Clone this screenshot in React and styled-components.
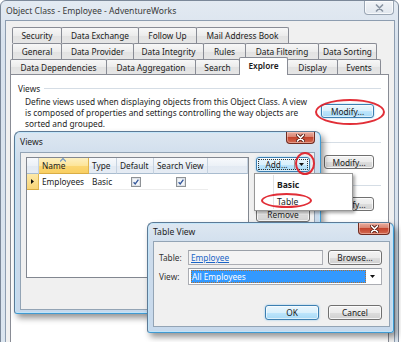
import React from 'react';
import styled, { createGlobalStyle, css } from 'styled-components';

const FONT = `"Noto Sans", "Segoe UI", sans-serif`;

const GlobalStyle = createGlobalStyle`
  html, body { margin: 0; padding: 0; }
  body {
    width: 401px; height: 342px; overflow: hidden; background: #ffffff;
    font-family: ${FONT}; font-size: 8.3px; color: #1b1b1b;
  }
  * { box-sizing: border-box; }
`;

const Desktop = styled.div`
  position: relative;
  width: 401px;
  height: 342px;
  overflow: hidden;
`;

/* ---------- main window ---------- */
const MainWindow = styled.div`
  width: 399px;
  height: 370px;
  border: 1px solid #7b8899;
  border-radius: 6px 6px 0 0;
  background: linear-gradient(#e3eaf2, #d8e2ed 40px, #dbe5ef);
  display: flex;
  flex-direction: column;
`;

const TitleBar = styled.div`
  height: ${p => p.$h}px;
  flex: none;
  display: flex;
  align-items: flex-start;
  padding-left: ${p => p.$pl}px;
`;

const TitleText = styled.div`
  align-self: center;
  font-size: 8.6px;
  color: ${p => (p.$dim ? '#3a3a3a' : '#1e1e1e')};
  white-space: nowrap;
`;

const CloseBtn = styled.div`
  margin-left: auto;
  margin-right: ${p => p.$mr}px;
  width: ${p => p.$w}px;
  height: ${p => p.$h}px;
  flex: none;
  display: flex;
  align-items: center;
  justify-content: center;
  border-radius: 0 0 4px 4px;
  ${p =>
    p.$active
      ? css`
          border: 1px solid #6f2b20;
          border-top: none;
          background: linear-gradient(#e9ad9f, #d98370 45%, #c4442d 50%, #d26a51);
          box-shadow: inset 0 0 0 1px rgba(255, 220, 210, 0.45);
        `
      : css`
          border: 1px solid #9aa6b4;
          border-top: none;
          background: linear-gradient(#f1f4f8, #e1e7ee);
          box-shadow: inset 0 0 0 1px rgba(255, 255, 255, 0.7);
        `}
`;

const XGlyph = ({ color, outline }) => (
  <svg width="9" height="8" viewBox="0 0 9 8">
    {outline && (
      <path d="M1.5 1 L7.5 7 M7.5 1 L1.5 7" stroke={outline} strokeWidth="3.4" strokeLinecap="round" />
    )}
    <path d="M1.5 1 L7.5 7 M7.5 1 L1.5 7" stroke={color} strokeWidth="1.7" strokeLinecap="round" />
  </svg>
);

const Client = styled.div`
  flex: 1;
  margin: 0 3px 0 4px;
  border: 1px solid #8d9db0;
  border-bottom: none;
  background: #f0f0f0;
  padding: 6px 5px 0 4px;
  display: flex;
  flex-direction: column;
`;

/* ---------- tabs ---------- */
const TabStrip = styled.div`
  position: relative;
  z-index: 1;
  display: flex;
  flex-direction: column;
`;

const TabRow = styled.div`
  height: ${p => p.$h}px;
  padding-left: ${p => p.$indent}px;
  display: flex;
  align-items: flex-end;
`;

const Tab = styled.div`
  width: ${p => p.$w}px;
  height: ${p => p.$h}px;
  margin-left: -1px;
  &:first-child { margin-left: 0; }
  flex: none;
  border: 1px solid #898c95;
  border-bottom: none;
  border-radius: 2px 2px 0 0;
  background: linear-gradient(#f7f7f7, #ececec 50%, #e2e2e2 51%, #e6e6e6);
  display: flex;
  align-items: center;
  justify-content: center;
  white-space: nowrap;
  color: #1b1b1b;
  ${p =>
    p.$selected &&
    css`
      position: relative;
      z-index: 2;
      height: ${p.$h + 3}px;
      margin-bottom: -1px;
      background: #ffffff;
      font-weight: 600;
      padding-bottom: 3px;
    `}
`;

const Panel = styled.div`
  flex: 1;
  background: #ffffff;
  border: 1px solid #898c95;
  padding: 8px 7px 0 7px;
  display: flex;
  flex-direction: column;
`;

const GroupHeader = styled.div`
  height: 11px;
  margin-top: ${p => p.$mt}px;
  display: flex;
  align-items: center;
  gap: 4px;
  white-space: nowrap;
  color: #1e1e1e;
  &::after {
    content: '';
    flex: 1;
    height: 1px;
    background: #d5dde5;
  }
`;

const GroupBody = styled.div`
  margin-top: 2px;
  min-height: ${p => p.$h}px;
  display: flex;
  align-items: flex-start;
  justify-content: flex-end;
`;

const Desc = styled.div`
  margin-left: 7px;
  margin-right: auto;
  line-height: 11px;
  white-space: nowrap;
  color: #1e1e1e;
`;

/* ---------- buttons ---------- */
const Button = styled.div`
  width: ${p => p.$w}px;
  height: ${p => p.$h || 15}px;
  margin-top: ${p => p.$mt || 0}px;
  margin-right: ${p => p.$mr || 0}px;
  flex: none;
  border: 1px solid #707070;
  border-radius: 3px;
  background: linear-gradient(#f3f3f3, #ebebeb 50%, #dddddd 51%, #d0d0d0);
  box-shadow: inset 0 0 0 1px rgba(255, 255, 255, 0.75);
  display: flex;
  align-items: center;
  justify-content: center;
  white-space: nowrap;
  color: #1b1b1b;
  ${p =>
    p.$hot &&
    css`
      border-color: #3c7fb1;
      background: linear-gradient(#eaf6fd, #d9f0fc 50%, #bee6fd 51%, #a7d9f5);
      box-shadow: inset 0 0 0 1px rgba(255, 255, 255, 0.6), 0 0 2px rgba(60, 160, 230, 0.6);
    `}
`;

const SplitButton = styled(Button)`
  justify-content: flex-start;
  padding: 1px;
`;

const FocusRect = styled.div`
  flex: 1;
  height: 100%;
  border: 1px dotted #333;
  display: flex;
  align-items: center;
`;

const SplitLabel = styled.div`
  flex: 1;
  text-align: center;
`;

const SplitArrow = styled.div`
  width: 13px;
  height: 100%;
  border-left: 1px solid #9a9a9a;
  display: flex;
  align-items: center;
  justify-content: center;
`;

/* ---------- dialogs ---------- */
const Window = styled.div`
  position: absolute;
  left: ${p => p.$x}px;
  top: ${p => p.$y}px;
  width: ${p => p.$w}px;
  height: ${p => p.$h}px;
  border: 1px solid #5c7a96;
  border-right-color: #3f9ad2;
  border-bottom-color: #3f9ad2;
  border-radius: 6px 6px 3px 3px;
  background: linear-gradient(#dde7f1, #cddcec 30px, #c7d9ec);
  box-shadow: inset 0 0 0 1px rgba(190, 230, 252, 0.8), 3px 4px 6px rgba(0, 0, 0, 0.42);
  display: flex;
  flex-direction: column;
`;

const DialogClient = styled.div`
  flex: 1;
  margin: 0 ${p => p.$mr}px ${p => p.$mb}px ${p => p.$ml}px;
  border: 1px solid #93a4b5;
  background: #f0f0f0;
  display: flex;
`;

const ViewsBody = styled.div`
  flex: 1;
  padding: 4px 5px 0 5px;
  display: flex;
  align-items: flex-start;
  gap: 7px;
`;

const Grid = styled.div`
  width: 223px;
  height: 121px;
  border: 1px solid #828790;
  background: #ffffff;
  display: flex;
  flex-direction: column;
`;

const GridRow = styled.div`
  height: ${p => p.$h}px;
  display: flex;
`;

const HeaderCell = styled.div`
  position: relative;
  width: ${p => p.$w}px;
  flex: ${p => (p.$fill ? 1 : 'none')};
  border-right: 1px solid #c5d2e0;
  border-bottom: 1px solid #a9bccf;
  background: linear-gradient(#f7f9fc, #ecf1f7 50%, #e2e9f2 51%, #e6ecf4);
  display: flex;
  align-items: center;
  padding-left: 3px;
  white-space: nowrap;
  color: #1b1b1b;
  ${p =>
    p.$hot &&
    css`
      background: linear-gradient(#fdf0c2, #fde59a 50%, #fbd774 51%, #f9cf62);
      border-right-color: #e0b650;
      border-bottom-color: #d9ad45;
    `}
`;

const SortGlyph = styled.svg`
  position: absolute;
  left: 21px;
  top: 0px;
`;

const Cell = styled.div`
  width: ${p => p.$w}px;
  flex: none;
  border-bottom: 1px solid #ececec;
  display: flex;
  align-items: center;
  justify-content: ${p => (p.$center ? 'center' : 'flex-start')};
  padding-left: ${p => (p.$center ? 0 : 3)}px;
  white-space: nowrap;
  ${p =>
    p.$rowHead &&
    css`
      justify-content: center;
      padding-left: 0;
      background: linear-gradient(#fde9a8, #f9d577);
      border-right: 1px solid #e0b650;
      border-bottom: 1px solid #d9ad45;
    `}
`;

const ButtonColumn = styled.div`
  display: flex;
  flex-direction: column;
  gap: 35px;
`;

const Check = () => (
  <svg width="10" height="10" viewBox="0 0 10 10">
    <rect x="0.5" y="0.5" width="9" height="9" fill="#f4f6f8" stroke="#8e9296" />
    <rect x="1.5" y="1.5" width="7" height="7" fill="none" stroke="#dfe3e8" />
    <path d="M2.6 5.2 L4.2 7 L7.4 2.6" fill="none" stroke="#33569a" strokeWidth="1.3" />
  </svg>
);

/* ---------- menu ---------- */
const Menu = styled.div`
  position: absolute;
  left: 254px;
  top: 173px;
  width: 99px;
  height: 38px;
  border: 1px solid #979797;
  background: #ffffff;
  box-shadow: 2px 2px 3px rgba(0, 0, 0, 0.35);
  padding-top: 2px;
  display: flex;
  flex-direction: column;
  z-index: 5;
  &::before {
    content: '';
    position: absolute;
    left: 18px;
    top: 1px;
    bottom: 1px;
    width: 1px;
    background: #e2e3e3;
    box-shadow: 1px 0 0 #ffffff;
  }
`;

const MenuItem = styled.div`
  height: 17px;
  padding-left: 22px;
  display: flex;
  align-items: center;
  font-size: 8.6px;
  font-weight: ${p => (p.$bold ? 700 : 400)};
  color: #1b1b1b;
`;

/* ---------- annotations ---------- */
const Ring = styled.div`
  position: absolute;
  left: ${p => p.$x}px;
  top: ${p => p.$y}px;
  width: ${p => p.$w}px;
  height: ${p => p.$h}px;
  border: 2px solid rgba(222, 28, 38, 0.92);
  border-radius: 50%;
  pointer-events: none;
  z-index: 10;
`;

/* ---------- table view ---------- */
const TVBody = styled.div`
  flex: 1;
  padding: 8px 7px 6px 5px;
  display: flex;
  flex-direction: column;
`;

const FormRow = styled.div`
  display: flex;
  align-items: center;
  margin-top: ${p => p.$mt || 0}px;
`;

const Label = styled.div`
  width: 29px;
  flex: none;
  color: #333;
`;

const TextBox = styled.div`
  width: ${p => p.$w}px;
  height: ${p => p.$h}px;
  margin-right: ${p => p.$mr || 0}px;
  flex: none;
  border: 1px solid #abadb3;
  border-top-color: #9aa0a8;
  background: ${p => (p.$ro ? '#f4f4f4' : '#ffffff')};
  display: flex;
  align-items: center;
  padding: 1px 2px;
`;

const Link = styled.span`
  color: #1a64c6;
  text-decoration: underline;
`;

const Selection = styled.div`
  flex: 1;
  height: 100%;
  background: #3399ff;
  color: #ffffff;
  outline: 1px dotted #b07030;
  outline-offset: -1px;
  display: flex;
  align-items: center;
  padding-left: 1px;
`;

const ComboArrow = styled.div`
  width: 13px;
  flex: none;
  display: flex;
  align-items: center;
  justify-content: center;
`;

const Footer = styled.div`
  margin-top: auto;
  display: flex;
  justify-content: flex-end;
  gap: 9px;
`;

const DownArrow = () => (
  <svg width="5" height="3" viewBox="0 0 5 3">
    <path d="M0 0 H5 L2.5 3 Z" fill="#111" />
  </svg>
);

const tabRows = [
  { indent: 2, h: 16, tabs: [['Security', 50], ['Data Exchange', 78], ['Follow Up', 59], ['Mail Address Book', 93]] },
  {
    indent: 2,
    h: 16,
    tabs: [['General', 50], ['Data Provider', 73], ['Data Integrity', 71], ['Rules', 43], ['Data Filtering', 74], ['Data Sorting', 59]],
  },
  {
    indent: 0,
    h: 15,
    tabs: [['Data Dependencies', 97], ['Data Aggregation', 90], ['Search', 45], ['Explore', 49, true], ['Display', 51], ['Events', 44]],
  },
];

export default function App() {
  return (
    <>
      <GlobalStyle />
      <Desktop>
        <MainWindow>
          <TitleBar $h={19} $pl={5}>
            <TitleText $dim>Object Class - Employee - AdventureWorks</TitleText>
            <CloseBtn $mr={4} $w={30} $h={14}>
              <XGlyph color="#8a95a3" />
            </CloseBtn>
          </TitleBar>
          <Client>
            <TabStrip>
              {tabRows.map((row, i) => (
                <TabRow key={i} $indent={row.indent} $h={row.h}>
                  {row.tabs.map(([name, w, sel]) => (
                    <Tab key={name} $w={w} $h={row.h} $selected={sel}>
                      {name}
                    </Tab>
                  ))}
                </TabRow>
              ))}
            </TabStrip>
            <Panel>
              <GroupHeader $mt={0}>Views</GroupHeader>
              <GroupBody $h={33}>
                <Desc>
                  Define views used when displaying objects from this Object Class. A view
                  <br />
                  is composed of properties and settings controlling the way objects are
                  <br />
                  sorted and grouped.
                </Desc>
                <Button $w={53} $h={14} $mt={8} $mr={7} $hot>
                  Modify...
                </Button>
              </GroupBody>
              <GroupHeader $mt={8} />
              <GroupBody $h={22}>
                <Button $w={50} $h={14} $mt={5} $mr={7}>
                  Modify...
                </Button>
              </GroupBody>
              <GroupHeader $mt={8} />
              <GroupBody $h={22}>
                <Button $w={50} $h={14} $mt={4} $mr={7}>
                  Modify...
                </Button>
              </GroupBody>
            </Panel>
          </Client>
        </MainWindow>

        <Window $x={14} $y={131} $w={307} $h={183}>
          <TitleBar $h={20} $pl={5}>
            <TitleText>Views</TitleText>
            <CloseBtn $active $mr={5} $w={29} $h={12}>
              <XGlyph color="#ffffff" outline="#5a1d14" />
            </CloseBtn>
          </TitleBar>
          <DialogClient $ml={5} $mr={5} $mb={3}>
            <ViewsBody>
              <Grid>
                <GridRow $h={16}>
                  <HeaderCell $w={12} />
                  <HeaderCell $w={50} $hot>
                    <SortGlyph width="6" height="4" viewBox="0 0 6 4">
                      <path d="M0 3.5 L3 0.5 L6 3.5" fill="none" stroke="#6f97c6" strokeWidth="1.2" />
                    </SortGlyph>
                    Name
                  </HeaderCell>
                  <HeaderCell $w={28}>Type</HeaderCell>
                  <HeaderCell $w={37}>Default</HeaderCell>
                  <HeaderCell $w={54}>Search View</HeaderCell>
                  <HeaderCell $fill />
                </GridRow>
                <GridRow $h={16}>
                  <Cell $w={12} $rowHead>
                    <svg width="3" height="5" viewBox="0 0 3 5">
                      <path d="M0 0 L3 2.5 L0 5 Z" fill="#111" />
                    </svg>
                  </Cell>
                  <Cell $w={50}>Employees</Cell>
                  <Cell $w={28}>Basic</Cell>
                  <Cell $w={37} $center>
                    <Check />
                  </Cell>
                  <Cell $w={54} $center>
                    <Check />
                  </Cell>
                </GridRow>
              </Grid>
              <ButtonColumn>
                <SplitButton $w={54} $hot>
                  <FocusRect>
                    <SplitLabel>Add...</SplitLabel>
                    <SplitArrow>
                      <DownArrow />
                    </SplitArrow>
                  </FocusRect>
                </SplitButton>
                <Button $w={54}>Remove</Button>
              </ButtonColumn>
            </ViewsBody>
          </DialogClient>
        </Window>

        <Menu>
          <MenuItem $bold>Basic</MenuItem>
          <MenuItem>Table</MenuItem>
        </Menu>

        <Window $x={147} $y={222} $w={247} $h={111}>
          <TitleBar $h={18} $pl={5}>
            <TitleText>Table View</TitleText>
            <CloseBtn $active $mr={3} $w={32} $h={12}>
              <XGlyph color="#ffffff" outline="#5a1d14" />
            </CloseBtn>
          </TitleBar>
          <DialogClient $ml={5} $mr={3} $mb={5}>
            <TVBody>
              <FormRow>
                <Label>Table:</Label>
                <TextBox $w={135} $h={15} $mr={5} $ro>
                  <Link>Employee</Link>
                </TextBox>
                <Button $w={54}>Browse...</Button>
              </FormRow>
              <FormRow $mt={3}>
                <Label>View:</Label>
                <TextBox $w={194} $h={17}>
                  <Selection>All Employees</Selection>
                  <ComboArrow>
                    <DownArrow />
                  </ComboArrow>
                </TextBox>
              </FormRow>
              <Footer>
                <Button $w={54} $hot>
                  OK
                </Button>
                <Button $w={54}>Cancel</Button>
              </Footer>
            </TVBody>
          </DialogClient>
        </Window>

        <Ring $x={315} $y={99} $w={70} $h={26} />
        <Ring $x={295} $y={152} $w={20} $h={23} />
        <Ring $x={261} $y={193} $w={51} $h={15} />
      </Desktop>
    </>
  );
}
